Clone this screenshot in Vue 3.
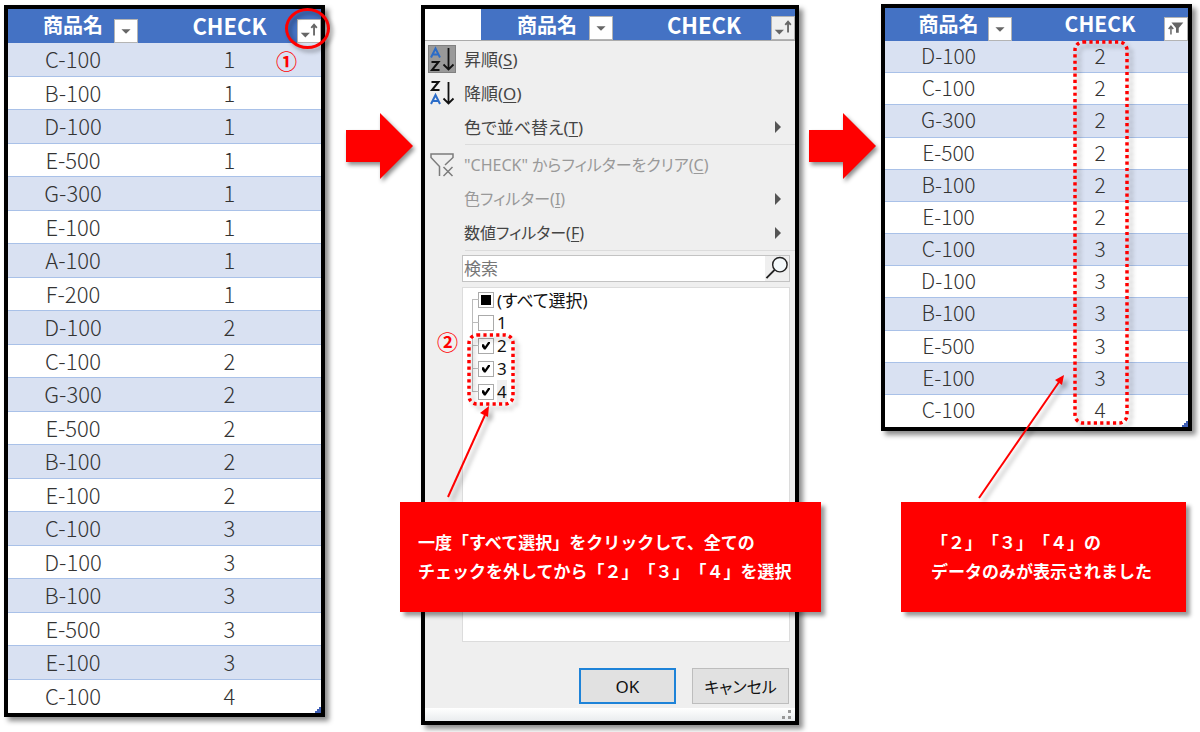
<script setup>
import { ref } from 'vue'

const before = [
  ['C-100', 1], ['B-100', 1], ['D-100', 1], ['E-500', 1], ['G-300', 1],
  ['E-100', 1], ['A-100', 1], ['F-200', 1], ['D-100', 2], ['C-100', 2],
  ['G-300', 2], ['E-500', 2], ['B-100', 2], ['E-100', 2], ['C-100', 3],
  ['D-100', 3], ['B-100', 3], ['E-500', 3], ['E-100', 3], ['C-100', 4],
]
const after = [
  ['D-100', 2], ['C-100', 2], ['G-300', 2], ['E-500', 2], ['B-100', 2], ['E-100', 2],
  ['C-100', 3], ['D-100', 3], ['B-100', 3], ['E-500', 3], ['E-100', 3], ['C-100', 4],
]
const sortItems = [
  { text: '昇順', key: 'S', icon: 'asc' },
  { text: '降順', key: 'O', icon: 'desc' },
  { text: '色で並べ替え', key: 'T', sub: true },
]
const filterItems = [
  { text: '"CHECK" からフィルターをクリア', key: 'C', icon: 'clear', disabled: true },
  { text: '色フィルター', key: 'I', sub: true, disabled: true },
  { text: '数値フィルター', key: 'F', sub: true },
]
const groups = [sortItems, filterItems]
const choices = ref([
  { label: '1', on: false },
  { label: '2', on: true },
  { label: '3', on: true },
  { label: '4', on: true },
])
const allOn = ref(false)
const query = ref('')
</script>

<template>
  <main class="stage">
    <section class="panel">
      <table class="sheet">
        <thead>
          <tr>
            <th class="name">商品名
              <button class="drop" aria-label="商品名のフィルター">
                <svg viewBox="0 0 24 24"><path d="M7 10h10l-5 5z" fill="#666" /></svg>
              </button>
            </th>
            <th>CHECK
              <button class="drop" aria-label="CHECKの並べ替え">
                <svg viewBox="0 0 24 24">
                  <path d="M3 14h10l-5 5z" fill="#666" />
                  <path d="M17.500 17V6M14.500 8.500l3-3.500 3 3.500" fill="none" stroke="#666" stroke-width="2" />
                </svg>
              </button>
            </th>
          </tr>
        </thead>
        <tbody>
          <tr v-for="(r, i) in before" :key="i"><td>{{ r[0] }}</td><td>{{ r[1] }}</td></tr>
        </tbody>
      </table>
      <svg class="corner" viewBox="0 0 6 6"><path d="M0 6V4h2V2h2V0h2v6z" fill="#3f5fb5" /></svg>
      <span class="ring"></span>
      <span class="step step-one">①</span>
    </section>

    <svg class="arrow" viewBox="0 0 67 66"><path d="M0 17h34V0l33 33-33 33V49H0z" fill="#f00" /></svg>

    <section class="panel dialog">
      <header class="dialog-head">
        <div class="head-name">商品名
          <button class="drop" aria-label="商品名のフィルター">
            <svg viewBox="0 0 24 24"><path d="M7 10h10l-5 5z" fill="#666" /></svg>
          </button>
        </div>
        <div class="head-check">CHECK
          <button class="drop pressed" aria-label="CHECKの並べ替え">
            <svg viewBox="0 0 24 24">
              <path d="M3 14h10l-5 5z" fill="#666" />
              <path d="M17.500 17V6M14.500 8.500l3-3.500 3 3.500" fill="none" stroke="#666" stroke-width="2" />
            </svg>
          </button>
        </div>
      </header>

      <div class="menu">
        <div v-for="(g, gi) in groups" :key="gi" class="group">
          <button v-for="m in g" :key="m.key" class="item" :disabled="m.disabled">
            <span class="icon" :class="{ active: m.icon === 'asc' }">
              <svg v-if="m.icon === 'asc' || m.icon === 'desc'" viewBox="0 0 28 28" fill="none" stroke-width="2">
                <path v-if="m.icon === 'asc'" d="M3 12.500L7.500 3.500l4.500 9M4.500 9.500h6" stroke="#2b6cc8" />
                <path v-if="m.icon === 'asc'" d="M3.500 17h7l-6.500 8h7.500" stroke="#111" />
                <path v-if="m.icon === 'desc'" d="M3.500 3h7l-6.500 8h7.500" stroke="#111" />
                <path v-if="m.icon === 'desc'" d="M3 25L7.500 16l4.500 9M4.500 22h6" stroke="#2b6cc8" />
                <path d="M20.500 3v21M15.500 19.500l5 5 5-5" stroke="#111" stroke-width="1.800" />
              </svg>
              <svg v-else-if="m.icon === 'clear'" viewBox="0 0 28 28" fill="none" stroke="#7c7c7c" stroke-width="1.500">
                <path d="M11.500 25V15.500L3 6.500V3h22v3.500L17 14" />
                <path d="M15.500 16l9 9M24.500 16l-9 9" />
              </svg>
            </span>
            <span class="label">{{ m.text }}(<u>{{ m.key }}</u>)</span>
            <svg v-if="m.sub" class="chevron" viewBox="0 0 6 12"><path d="M0 0l6 6-6 6z" fill="#555" /></svg>
          </button>
        </div>
      </div>

      <div class="body">
        <div class="search">
          <input v-model="query" type="text" placeholder="検索" aria-label="検索">
          <button aria-label="検索を実行">
            <svg viewBox="0 0 24 26" fill="none" stroke="#222" stroke-width="1.500">
              <circle cx="15" cy="9" r="7.500" fill="#f4f9fb" /><path d="M9.500 14.500L1 23" stroke-width="2" />
            </svg>
          </button>
        </div>
        <div class="list">
          <label class="choice mixed"><input v-model="allOn" type="checkbox">(すべて選択)</label>
          <label v-for="c in choices" :key="c.label" class="choice" :class="{ current: c.label === '4' }">
            <input v-model="c.on" type="checkbox"><span>{{ c.label }}</span>
          </label>
        </div>
        <div class="actions">
          <button class="ok">OK</button>
          <button>キャンセル</button>
        </div>
      </div>
      <footer class="grip">
        <svg viewBox="0 0 10 10" fill="#999"><path d="M6 0h3v3H6zM0 6h3v3H0zM6 6h3v3H6z" /></svg>
      </footer>

      <span class="step step-two">②</span>
      <svg class="marks marks-list" viewBox="0 0 60 170">
        <rect x="8" y="5" width="44" height="69" rx="8" class="dots" />
        <path d="M-13 167L24 85" class="line" />
        <path d="M28 76l-9 7 8 4z" fill="#f00" />
      </svg>
      <p class="callout callout-pick">一度「すべて選択」をクリックして、全ての<br>チェックを外してから「２」「３」「４」を選択</p>
    </section>

    <svg class="arrow second" viewBox="0 0 67 66"><path d="M0 17h34V0l33 33-33 33V49H0z" fill="#f00" /></svg>

    <div class="result">
      <section class="panel">
        <table class="sheet compact">
          <thead>
            <tr>
              <th class="name">商品名
                <button class="drop" aria-label="商品名のフィルター">
                  <svg viewBox="0 0 24 24"><path d="M7 10h10l-5 5z" fill="#666" /></svg>
                </button>
              </th>
              <th>CHECK
                <button class="drop" aria-label="CHECKのフィルター">
                  <svg viewBox="0 0 24 24">
                    <path d="M7 5h13l-5 6v5h-3v-5z" fill="#666" />
                    <path d="M6.500 18V10M4 12l2.500-3L9 12" fill="none" stroke="#666" stroke-width="1.600" />
                  </svg>
                </button>
              </th>
            </tr>
          </thead>
          <tbody>
            <tr v-for="(r, i) in after" :key="i"><td>{{ r[0] }}</td><td>{{ r[1] }}</td></tr>
          </tbody>
        </table>
        <svg class="corner" viewBox="0 0 6 6"><path d="M0 6V4h2V2h2V0h2v6z" fill="#3f5fb5" /></svg>
        <svg class="marks marks-result" viewBox="0 0 160 465">
          <rect x="100" y="5" width="52" height="381" rx="8" class="dots" />
          <path d="M4 461L84 345" class="line" />
          <path d="M89 338l-9 5 7 5z" fill="#f00" />
        </svg>
      </section>
      <p class="callout callout-result"><span>「２」「３」「４」の</span><br>データのみが表示されました</p>
    </div>
  </main>
</template>

<style>
body { background: #fff; }
</style>

<style scoped>
.stage {
  display: grid;
  grid-template-columns: minmax(0, 321fr) 96px minmax(0, 378fr) 82px minmax(0, 311fr);
  align-items: start;
  padding: 5px 8px 7px 4px;
  font-family: "Noto Sans CJK JP", sans-serif;
  color: #333;
}
button, input { font: inherit; color: inherit; margin: 0; box-sizing: border-box; }
.panel {
  position: relative;
  border: 4px solid #000;
  background: #fff;
  box-shadow: 4px 4px 5px rgba(0, 0, 0, 0.45);
}
.sheet {
  width: 100%;
  border-collapse: separate;
  border-spacing: 0;
  table-layout: fixed;
  font-size: 22px;
}
.sheet th, .sheet td {
  box-sizing: border-box;
  height: 33px;
  padding: 0;
  text-align: center;
  line-height: 30px;
  vertical-align: top;
  font-weight: 300;
}
.sheet th {
  position: relative;
  height: 34px;
  line-height: 32px;
  background: #4472c4;
  color: #fff;
  font-weight: 700;
}
.sheet th.name { width: 130px; font-size: 20px; }
.sheet td { border-bottom: 1px solid #a9c1e8; }
.sheet tr:nth-child(odd) td { height: 34px; background: #d9e1f2; }
.sheet tr:last-child td { border-bottom: 0; }
.compact { font-size: 21px; }
.compact th { height: 33px; line-height: 31px; }
.compact th.name { width: 127px; }
.compact td, .compact tr:nth-child(odd) td { height: 32px; line-height: 29px; }
.compact tr:nth-child(6n + 3) td { height: 33px; }
.drop {
  position: absolute;
  right: 0;
  bottom: 0;
  width: 24px;
  height: 24px;
  padding: 0;
  border: 1px solid #b4b4b4;
  background: #fff;
}
.drop.pressed { background: #efefef; }
.drop svg { display: block; width: 100%; height: 100%; }
.corner { position: absolute; right: 0; bottom: 0; width: 6px; height: 6px; }
.ring {
  position: absolute;
  top: -1px;
  right: -9px;
  width: 39px;
  height: 35px;
  border: 3px solid #f00;
  border-radius: 50%;
  filter: drop-shadow(3px 3px 2px rgba(0, 0, 0, 0.35));
}
.step { position: absolute; color: #f00; font-size: 21px; line-height: 24px; font-weight: 700; }
.step-one { right: 24px; top: 39px; }
.step-two { left: 12px; top: 320px; }

.arrow {
  width: 67px;
  height: 66px;
  margin: 108px 0 0 21px;
  overflow: visible;
  filter: drop-shadow(2px 3px 2px rgba(0, 0, 0, 0.45));
}
.arrow.second { margin-left: 10px; }

.dialog { background: #efefef; }
.dialog-head {
  display: flex;
  box-sizing: border-box;
  height: 32px;
  padding-left: 56px;
  background: #fff;
  border-bottom: 1px solid #ababab;
  color: #fff;
  font-weight: 700;
  line-height: 31px;
  text-align: center;
}
.head-name, .head-check { position: relative; background: #4472c4; }
.head-name { width: 132px; font-size: 20px; }
.head-check { flex: 1; font-size: 22px; }
.menu { padding: 1px 0 0 3px; }
.group { border-bottom: 1px solid #ddd; border-image: linear-gradient(to right, transparent 38px, #dcdcdc 38px) 1; font-size: 17px; }
.group + .group { padding-top: 3px; font-size: 16px; }
.item {
  display: flex;
  align-items: center;
  width: 100%;
  height: 34px;
  padding: 0 14px 0 0;
  gap: 8px;
  border: 0;
  background: none;
  text-align: left;
  font-family: "Noto Sans", "Noto Sans CJK JP", sans-serif;
  font-feature-settings: "palt";
  color: #444;
}
.item:disabled { color: #999; }
.icon { width: 28px; height: 28px; flex: none; box-sizing: border-box; }
.icon.active { background: #999; outline: 1px solid #808080; outline-offset: -1px; }
.icon svg { display: block; width: 28px; height: 28px; }
.label { flex: 1; padding-bottom: 2px; white-space: nowrap; }
.label u { text-underline-offset: 2px; text-decoration-thickness: 1px; }
.chevron { width: 6px; height: 12px; }

.body { padding: 4px 5px 4px 37px; }
.search { display: flex; height: 27px; box-sizing: border-box; border: 1px solid #c3c3c3; background: #fff; }
.search input {
  flex: 1;
  min-width: 0;
  padding: 0 1px 2px;
  border: 0;
  background: #fff;
  font-size: 17px;
  outline: 0;
}
.search input::placeholder { color: #777; opacity: 1; }
.search button { width: 24px; padding: 0; border: 0; background: #efefef; }
.search svg { display: block; width: 24px; height: 25px; }
.list {
  display: flex;
  flex-direction: column;
  min-height: 355px;
  box-sizing: border-box;
  margin-top: 5px;
  border: 1px solid #dcdcdc;
  background: #fff;
}
.choice {
  position: relative;
  display: flex;
  align-items: center;
  gap: 3px;
  height: 23px;
  padding-left: 15px;
  font-family: "Noto Sans", "Noto Sans CJK JP", sans-serif;
  font-size: 17px;
  font-feature-settings: "palt";
  color: #111;
}
.choice::before {
  content: "";
  position: absolute;
  left: 9px;
  top: -12px;
  width: 6px;
  height: 23px;
  border: solid #bbb;
  border-width: 0 0 1px 1px;
}
.choice.mixed::before { top: 11px; height: 1px; border-width: 1px 0 0 1px; }
.choice.current span { background: #efefef; }
.choice input {
  appearance: none;
  display: grid;
  place-items: center;
  width: 16px;
  height: 16px;
  border: 1px solid #aaa;
  background: #fff;
}
.choice input:checked::after {
  content: "";
  width: 8px;
  height: 8px;
  background: #000;
  clip-path: polygon(0 35%, 25% 35%, 38% 62%, 80% 0, 100% 0, 100% 22%, 45% 100%, 25% 100%, 0 65%);
}
.choice.mixed input::after { content: ""; width: 10px; height: 10px; background: #000; }
.actions { display: flex; justify-content: flex-end; gap: 16px; margin: 26px 1px 0 0; }
.actions button {
  width: 97px;
  height: 36px;
  padding: 0;
  border: 1px solid #bdbdbd;
  background: #e1e1e1;
  color: #111;
  font-size: 16px;
  font-family: "Noto Sans", "Noto Sans CJK JP", sans-serif;
  font-feature-settings: "palt";
}
.actions .ok { border: 2px solid #1e83d8; font-size: 17px; }
.grip {
  display: flex;
  justify-content: flex-end;
  align-items: center;
  height: 13px;
  padding-right: 3px;
  background: linear-gradient(#fff, #e9ecee);
}
.grip svg { width: 10px; height: 10px; }

.marks { position: absolute; overflow: visible; pointer-events: none; filter: drop-shadow(4px 4px 2px rgba(0, 0, 0, 0.3)); }
.marks-list { left: 36px; top: 321px; width: 60px; height: 170px; }
.marks-result { left: 90px; top: 29px; width: 160px; height: 465px; }
.dots { fill: none; stroke: #f00; stroke-width: 3.500; stroke-dasharray: 3.200 3.200; }
.line { fill: none; stroke: #f00; stroke-width: 2; }

.callout {
  box-sizing: border-box;
  height: 110px;
  margin: 0;
  padding: 25px 0 0 18px;
  background: #f00;
  box-shadow: 4px 4px 4px rgba(0, 0, 0, 0.4);
  color: #fff;
  font-size: 17px;
  font-weight: 700;
  line-height: 29px;
  white-space: nowrap;
  text-spacing-trim: space-all;
}
.callout-pick { position: absolute; left: -25px; right: -26px; top: 493px; }
.result { display: flex; flex-direction: column; margin-top: -1px; }
.callout-result { margin: 71px 6px 0 20px; padding-left: 30px; }
</style>
